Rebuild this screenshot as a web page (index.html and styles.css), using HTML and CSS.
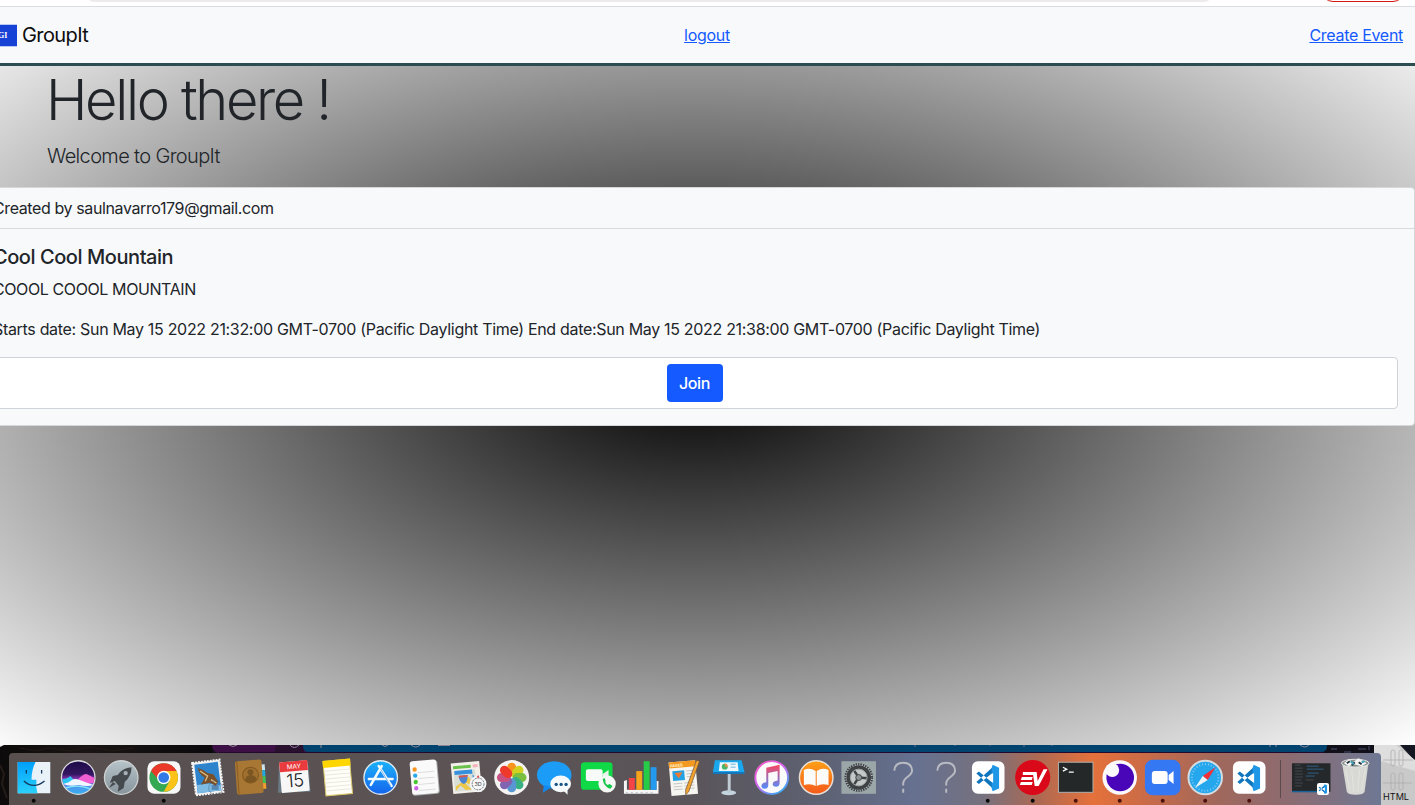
FILE: index.html
```html
<!DOCTYPE html>
<html lang="en">
<head>
<meta charset="utf-8">
<title>GroupIt</title>
<link rel="stylesheet" href="styles.css">
</head>
<body>
<div class="screen">
  <div class="toolbar"><div class="omnibox"></div><div class="update-pill"></div></div>
  <main class="page">
    <nav class="navbar">
      <div class="brand"><span class="logo">GI</span><span class="brand-name">GroupIt</span></div>
      <a class="link logout" href="#">logout</a>
      <a class="link create" href="#">Create Event</a>
    </nav>
    <header class="hero">
      <h1 class="title"><span>Hello there !</span></h1>
      <p class="lead"><span>Welcome to GroupIt</span></p>
    </header>
    <section class="card">
      <div class="card-header"><span>Created by saulnavarro179@gmail.com</span></div>
      <div class="card-body">
        <h5 class="card-title"><span>Cool Cool Mountain</span></h5>
        <p class="card-text caps"><span>COOOL COOOL MOUNTAIN</span></p>
        <p class="card-text dates"><span>Starts date: Sun May 15 2022 21:32:00 GMT-0700 (Pacific Daylight Time) End date:Sun May 15 2022 21:38:00 GMT-0700 (Pacific Daylight Time)</span></p>
        <div class="join-box"><button class="join">Join</button></div>
      </div>
    </section>
  </main>
  <footer class="desktop">
    <svg class="wallpaper" width="1415" height="61" viewBox="0 0 1415 61">
      <defs><linearGradient id="rock" x2="1"><stop stop-color="#0c0a0a"/><stop offset=".4" stop-color="#1a1514"/><stop offset="1" stop-color="#0b090c"/></linearGradient></defs>
      <rect width="1415" height="61" fill="#111018"/>
      <rect width="213" height="61" fill="url(#rock)"/>
      <path d="M20 3l16 3 13-3 21 3 19-4 24 4 20-3" stroke="#221a18" fill="none"/>
      <path d="M0 20l4 9-2 10 5 14" stroke="#241c19" fill="none" stroke-width="2"/>
      <path d="M212 0h95v8h-89q-6-2-6-8" fill="#3c1045"/>
      <path d="M276 0h28v8h-30z" fill="#29102f"/>
      <path d="M303 0h1024v1q0 6-6 6H309q-6 0-6-6z" fill="#00436f"/>
      <path d="M219 7.500h1105" stroke="#24092e"/>
      <g stroke="#8e8594" fill="none"><path d="M229 0q4 3 8 0M290 0q4 5 9 0M382 0q3 3 6 0M411 0q5 4 9 0M438 .500h12M321 0v3M1270 0v2M1276 0v2M1300 0q5 4 9 0"/><path d="M915 0v2M955 0v1M990 0v1M1024 0v2M1052 0v1" opacity=".7"/></g>
      <g stroke="#2e3145" stroke-width="2"><path d="M1331 4h6M1344 7h7M1358 4h8M1369 1v4"/></g>
      <path d="M1374 0h41v61h-41z" fill="#c9c9c9"/><path d="M1400 0h15v16z" fill="#141722"/><path d="M1374 0h22l19 15v11l-41-12z" fill="#dedede"/>
      <g stroke="#ababab" fill="none" stroke-width=".7"><path d="M1383 15h30M1383 38h29"/><rect x="1391" y="5" width="4" height="16" rx="2"/><rect x="1399" y="5" width="4" height="16" rx="2"/><rect x="1391" y="28" width="4" height="17" rx="2"/><rect x="1399" y="28" width="4" height="17" rx="2"/></g>
      <path d="M0 0v2l4-2zM1415 0h-9q6 0 9-3z" fill="#eee"/>
      <text x="1383" y="55" class="thumb-label" textLength="26" lengthAdjust="spacingAndGlyphs">HTML</text>
    </svg>
    <div class="dock">
      <svg viewBox="0 0 44 52"><defs><linearGradient id="fb" x2="0" y2="1"><stop stop-color="#00a0fb"/><stop offset="1" stop-color="#2ad0fb"/></linearGradient></defs><path d="M5.8 8.800h33v31.600h-33z" fill="#e9f1f9"/><path d="M5.800 8.800h18c-3 6-4 12-4 18h5q-1 7 1 13.600h-20z" fill="url(#fb)"/><path d="M14.500 17v3.500M30 17v3.500" stroke="#14375e" stroke-width="1.300"/><path d="M12 28q10 9 21 0" fill="none" stroke="#14375e" stroke-width="1.300"/><circle class="dot" cx="22" cy="48" r="2"/></svg>
      <svg viewBox="0 0 44 52"><defs><linearGradient id="si" x2="0" y2="1"><stop stop-color="#1c0b48"/><stop offset=".4" stop-color="#33165f"/><stop offset=".55" stop-color="#8a35b5"/><stop offset=".75" stop-color="#5791ef"/><stop offset="1" stop-color="#2fb2ee"/></linearGradient></defs><circle cx="22.500" cy="24.500" r="17" fill="url(#si)" stroke="#dadadd" stroke-width="1.300"/><path d="M6.500 26q5 0 8-3 3 3 5 6l-12 2z" fill="#2bc4f0"/><path d="M22 27q5-6 9-6 4 2 8 4l-1 5-14 2z" fill="#ef5fd2"/><path d="M7 31q6-1 9-4 3-2 8 0t14 5q-6 2-15 0-9 2-16-1" fill="#f1f5ff"/><path d="M10 35q12-4 25 1" fill="none" stroke="#7fe8f5" stroke-width="1.500"/></svg>
      <svg viewBox="0 0 44 52"><defs><linearGradient id="ro" x2="0" y2="1"><stop stop-color="#b6c3c9"/><stop offset="1" stop-color="#88949b"/></linearGradient></defs><circle cx="22.500" cy="24.500" r="17" fill="url(#ro)" stroke="#cdd2d3" stroke-width="1.300"/><path d="M33 14q-10 1-14 8l-5 1-3 7 5-2 4 5-1 6 6-4 1-6q7-6 7-15" fill="#454a4e"/><circle cx="27" cy="20" r="2.200" fill="#a8b2b8"/><path d="M14 29l-4 6 7-4z" fill="#474c50"/></svg>
      <svg viewBox="0 0 44 52"><rect x="5.500" y="8" width="33.500" height="33" rx="7" fill="#f8f8f8"/><circle cx="22" cy="24.500" r="14.500" fill="#35a853"/><path d="M9.200 17.800A14.500 14.500 0 0 1 35 18H22L18 28z" fill="#ea3928"/><path d="M22 39A14.500 14.500 0 0 0 35 18H22l6 10z" fill="#fbc218"/><circle cx="22" cy="24.500" r="6.800" fill="#fff"/><circle cx="22" cy="24.500" r="5.400" fill="#3079e6"/><circle class="dot" cx="22" cy="48" r="2"/></svg>
      <svg viewBox="0 0 44 52"><g transform="rotate(-7 22 24)"><rect x="8" y="8" width="28" height="33" fill="#eee" stroke="#f7f7f7" stroke-width="2" stroke-dasharray="2 1"/><rect x="10" y="10" width="24" height="29" fill="#2e83cd"/><path d="M10 31q13-2 24 3v5H10z" fill="#7dbbe5"/><path d="M13 14q6 2 9 6l6 2 4 8-3 4-5-4-10 1 3-4 2-3q-5-3-6-10" fill="#79502c"/><path d="M15 17l7 6-3 5M25 27l5 4" stroke="#dfbd82" stroke-width="1.300" fill="none"/></g><circle cx="30" cy="35" r="7" fill="none" stroke="#3a4c61" opacity=".4"/><rect x="26" y="32" width="7" height="5" fill="#2d5684" opacity=".5"/></svg>
      <svg viewBox="0 0 44 52"><g transform="rotate(-4 22 24)"><path d="M33 12h4v6h-4z" fill="#c9e4ec"/><path d="M33 18h4v6h-4z" fill="#21a9dd"/><path d="M33 24h4v7h-4z" fill="#42bf55"/><path d="M33 31h4v6h-4z" fill="#f29e2e"/><rect x="7" y="7" width="27" height="34" rx="2" fill="#a77733"/><path d="M9 7v34" stroke="#8b5d23"/><circle cx="22" cy="22" r="8" fill="#9f702e" stroke="#81571f"/><circle cx="22" cy="19" r="3" fill="#7b5622"/><path d="M16 27q1-5 6-5t6 5q-6 5-12 0" fill="#7b5622"/></g></svg>
      <svg viewBox="0 0 44 52"><path d="M6 13l-1 27 33-1-2-27z" fill="#687983"/><g transform="rotate(-5 22 24)"><rect x="7.500" y="8" width="28.500" height="31" rx="1" fill="#f7f7f7"/><path d="M7.500 8H36v10H7.500z" fill="#e93b3d"/><text x="22" y="15.500" class="cal-m">MAY</text><text x="22" y="34" class="cal-d">15</text></g></svg>
      <svg viewBox="0 0 44 52"><g transform="rotate(-5 22 24)"><rect x="8.500" y="7" width="27" height="35" fill="#fffef7" stroke="#d9c769"/><path d="M8 6.500h28v7H8z" fill="#ffd600"/><path d="M9 17h26M9 21h26M9 25h26M9 29h26M9 33h26M9 37h26" stroke="#dfded9" stroke-width=".7"/></g></svg>
      <svg viewBox="0 0 44 52"><defs><linearGradient id="as" x2="0" y2="1"><stop stop-color="#1bb2fa"/><stop offset="1" stop-color="#1464ec"/></linearGradient></defs><circle cx="22" cy="24.500" r="17" fill="url(#as)" stroke="#e1e9ef" stroke-width="1.400"/><path d="M23 13L12 32M20 13l13 20M10 26h24" stroke="#f4fbff" stroke-width="2.600" stroke-linecap="round"/><path d="M22 16l10 17" stroke="#287fd8" stroke-width=".6"/></svg>
      <svg viewBox="0 0 44 52"><g transform="rotate(-5 22 24)"><rect x="8" y="8" width="28" height="34" rx="3" fill="#a6a8aa"/><rect x="8" y="7" width="27" height="34" rx="3" fill="#fafafa"/><path d="M15 19h17M15 25h17M15 31h17M15 37h17" stroke="#ddd"/><circle cx="12.500" cy="15.500" r="2.200" fill="#f79320"/><circle cx="12.500" cy="21.800" r="2.200" fill="#28a9ec"/><circle cx="12.500" cy="28.200" r="2.200" fill="#48c62f"/><circle cx="12.500" cy="34.600" r="2.200" fill="#cd60e8"/></g></svg>
      <svg viewBox="0 0 44 52"><g transform="rotate(-5 20 24)"><rect x="6" y="9" width="29" height="31" fill="#f2f0e9"/><path d="M8 12h18v3H8z" fill="#69c24c"/><path d="M28 12h5v3h-5z" fill="#f5b1bd"/><path d="M8 17h22v21H8z" fill="#d9ded6"/><path d="M9 17h18v5l5 5v4l-5-4v-6H9z" fill="#3590dd"/><path d="M9 33l8-5 8 9h-6l-5-5-5 5zM16 28l7-4 5 10" fill="#edc846"/><path d="M13 22h9q0 7-4.500 9Q13 29 13 22" fill="#4c85d0"/><path d="M13 22h9v2h-9z" fill="#da594d"/></g><circle cx="32.500" cy="31" r="8.500" fill="#f6f6f6"/><circle cx="32.500" cy="31" r="6" fill="none" stroke="#66727e" stroke-dasharray="2 1"/><path d="M31 24.500h3L32.500 22z" fill="#e14242"/><text x="32.500" y="33" class="map-t">3D</text></svg>
      <svg viewBox="0 0 44 52"><circle cx="22" cy="24.500" r="17.700" fill="#f5f4f3"/><g transform="translate(22 24.500)" class="petals"><rect x="-4.500" y="-15" width="9" height="14" rx="4.500" fill="#f98e10"/><rect x="-4.500" y="-15" width="9" height="14" rx="4.500" fill="#cfd015" transform="rotate(45)"/><rect x="-4.500" y="-15" width="9" height="14" rx="4.500" fill="#74bd36" transform="rotate(90)"/><rect x="-4.500" y="-15" width="9" height="14" rx="4.500" fill="#2fac7f" transform="rotate(135)"/><rect x="-4.500" y="-15" width="9" height="14" rx="4.500" fill="#5093d2" transform="rotate(180)"/><rect x="-4.500" y="-15" width="9" height="14" rx="4.500" fill="#7a5cae" transform="rotate(225)"/><rect x="-4.500" y="-15" width="9" height="14" rx="4.500" fill="#c54a7b" transform="rotate(270)"/><rect x="-4.500" y="-15" width="9" height="14" rx="4.500" fill="#ef2f20" transform="rotate(315)"/></g></svg>
      <svg viewBox="0 0 44 52"><ellipse cx="21.500" cy="22" rx="17.500" ry="14" fill="#1b9cf7"/><path d="M11 32l-1 8 9-6" fill="#1289ed"/><ellipse cx="28" cy="31" rx="10.500" ry="8.500" fill="#f7fbfd"/><path d="M31 38l4 4v-6z" fill="#f7fbfd"/><g fill="#165387"><circle cx="23.500" cy="31.500" r="1.700"/><circle cx="28.500" cy="31.500" r="1.700"/><circle cx="33.500" cy="31.500" r="1.700"/></g></svg>
      <svg viewBox="0 0 44 52"><rect x="4" y="9" width="32" height="28" rx="3.500" fill="#0fd947"/><rect x="9" y="16" width="17" height="12" rx="2" fill="#f8faf7"/><path d="M26 21l6-4v12l-6-4" fill="#e9f3e9"/><circle cx="30.500" cy="31" r="8.800" fill="#f6f8f6"/><path d="M26 26q1 8 8 10l2-3-3-2-2 1q-3-2-2-4l-1-3z" fill="#16c64a"/></svg>
      <svg viewBox="0 0 44 52"><path d="M4 28l3-1v10h30v-9h2v13H4z" fill="#f6f6f6"/><path d="M9 25h6v12H9z" fill="#f44446"/><path d="M16.500 18h6v19h-6z" fill="#f9a51b"/><path d="M24 8h6v29h-6z" fill="#27cc46"/><path d="M31 14h6v23h-6z" fill="#249aef"/><path d="M6 40h30" stroke="#aeb4b8" stroke-dasharray="2 3"/></svg>
      <svg viewBox="0 0 44 52"><g transform="rotate(-5 22 24)"><rect x="7" y="8" width="27" height="34" fill="#f7f5f0"/><path d="M7 8h27v6H7z" fill="#f4991f"/><text x="8" y="13" class="pages-t">PAGES</text><path d="M10 17h12v10H10z" fill="#24a2e4"/><path d="M12 19h8l-4 6z" fill="#ef7832"/><path d="M24 18h8M24 21h8M24 24h8M10 30h9M21 30h10M10 33h9M21 33h10M10 36h9M21 36h10" stroke="#c4c6c6"/></g><path d="M34 7l3 1-11 31-3 3 0-5z" fill="#f3a42f" stroke="#6c4d34" stroke-width=".7"/></svg>
      <svg viewBox="0 0 44 52"><ellipse cx="22" cy="40" rx="7.500" ry="2.500" fill="#c4d4dd"/><path d="M21 20h3v20h-3z" fill="#becbd3"/><path d="M8 7h27l3 12H6z" fill="#19a8ed"/><path d="M6 19h32v2H6z" fill="#1577b9"/><path d="M13 9h18l1 9H12z" fill="#eff7fa"/><circle cx="18" cy="13.500" r="3" fill="#47b86a"/><path d="M18 13v-3q3 1 3 4" fill="#f48745"/><path d="M24 11h5M24 14h5" stroke="#64b4df"/></svg>
      <svg viewBox="0 0 44 52"><defs><linearGradient id="mu" x2=".7" y2="1"><stop stop-color="#f659bd"/><stop offset=".5" stop-color="#d764ef"/><stop offset="1" stop-color="#3ca8f3"/></linearGradient><linearGradient id="mn" x2="0" y2="1"><stop stop-color="#fb465e"/><stop offset="1" stop-color="#548cfd"/></linearGradient></defs><circle cx="22" cy="24.500" r="16.600" fill="#fafafa" stroke="url(#mu)" stroke-width="2"/><path d="M16.500 14.500L30 11.500V30q0 3.500-3.500 3.800-3.500 0-3.500-2.800 0-3 5-3.600V18l-9.500 2v12q0 3.500-3.500 3.800-3.500 0-3.500-2.800 0-3 5-3.600z" fill="url(#mn)"/></svg>
      <svg viewBox="0 0 44 52"><defs><linearGradient id="bk" x2="0" y2="1"><stop stop-color="#ffa016"/><stop offset="1" stop-color="#f4591b"/></linearGradient></defs><circle cx="22.500" cy="24.500" r="17" fill="url(#bk)" stroke="#e7dfd6" stroke-width="1.500"/><path d="M22 18q-6-4-12-1v15q7-2 12 1zM23 18q6-4 12-1v15q-7-2-12 1z" fill="#fbfbf9"/></svg>
      <svg viewBox="0 0 44 52"><rect x="4.500" y="8" width="35" height="33" fill="#9ba6a9"/><circle cx="22" cy="24.500" r="13.500" fill="#c5c8c8" stroke="#3e4346" stroke-width="2" stroke-dasharray="1.500 1"/><circle cx="22" cy="24.500" r="10.500" fill="none" stroke="#3e4245" stroke-width="4"/><path d="M22 24.500l12 1M22 24.500L15 14M22 24.500L15 35" stroke="#404548" stroke-width="2.500"/><circle cx="22" cy="24.500" r="3" fill="#8c9293" stroke="#404548"/><circle cx="22" cy="24.500" r="8.500" fill="none" stroke="#9fa4a5"/></svg>
      <svg viewBox="0 0 44 52"><path class="q" d="M13.500 17.500q.5-8 9-8t9 8c0 6-9 6.500-9 13v2M22.500 36v4"/></svg>
      <svg viewBox="0 0 44 52"><path class="q" d="M13.500 17.500q.5-8 9-8t9 8c0 6-9 6.500-9 13v2M22.500 36v4"/></svg>
      <svg viewBox="0 0 44 52"><use href="#code"/><circle class="dot" cx="21" cy="48" r="2"/></svg>
      <svg viewBox="0 0 44 52"><circle cx="22" cy="24.500" r="17.800" fill="#da091a"/><path d="M12 19h12l-1 3H12zM11 24h11l-1 3H10zM10 29h12l-1 3H9zM22 19h4l1 9 6-12h4l-9 17h-4z" fill="#fff"/><circle class="dot" cx="22" cy="48" r="2"/></svg>
      <svg viewBox="0 0 44 52"><rect x="4.500" y="9" width="35" height="30.500" fill="#252829" stroke="#aeb0ad"/><path d="M9 14l4 2-4 2M15 19h5" stroke="#fff" stroke-width="1.200" fill="none"/><circle class="dot red" cx="22" cy="48" r="2"/></svg>
      <svg viewBox="0 0 44 52"><circle cx="22" cy="24.500" r="17.500" fill="#fafafd"/><circle cx="22.500" cy="24.500" r="14" fill="#4906b8"/><circle cx="14.500" cy="17" r="7" fill="#fafafd"/><circle class="dot red" cx="22" cy="48" r="2"/></svg>
      <svg viewBox="0 0 44 52"><rect x="4" y="6.500" width="36" height="36" rx="8" fill="#3478f4"/><rect x="11" y="18" width="16" height="13" rx="3" fill="#fff"/><path d="M28 22l5-4v13l-5-4z" fill="#fff"/><circle class="dot red" cx="22" cy="48" r="2"/></svg>
      <svg viewBox="0 0 44 52"><circle cx="21.500" cy="24.500" r="17" fill="#24a7ed" stroke="#d6dce0" stroke-width="2"/><circle cx="21.500" cy="24.500" r="13.500" fill="none" stroke="#87c9f2" stroke-width="2" stroke-dasharray="1 2"/><path d="M32 14L24 27l-5-4z" fill="#ef3038"/><path d="M24 27l-5-4-8 12z" fill="#edf4f8"/><circle class="dot red" cx="21.500" cy="48" r="2"/></svg>
      <svg viewBox="0 0 44 52"><g id="code"><rect x="5" y="8" width="33" height="33" rx="6" fill="#fff"/><path d="M9.500 20.500l2.500-2L27 30.500v6zM9.500 29l2.500 2 15-12v-6z" fill="#0f75bd"/><path d="M26 11.500l6.500 3v21l-6.500 3-1-3v-21z" fill="#1f97e6"/><path d="M26.500 20v10l-6.500-5z" fill="#fff"/></g><circle class="dot red" cx="21.500" cy="48" r="2"/></svg>
      <span class="separator"></span>
      <svg class="window" viewBox="0 0 44 52"><path d="M2 10h39v29H2z" fill="#25282b"/><path d="M5 12h6M5 15h8M5 18h7M5 21h8M5 24h8M5 27h7M5 30h8M5 33h7" stroke="#44494c"/><path d="M17 13h12M17 16h17M18 20h11M16 23h9" stroke="#2f6187"/><path d="M16 27h8" stroke="#44494c"/><path d="M2 38h28v1.500H2z" fill="#176199"/><use href="#code" transform="translate(25.500 27) scale(.37)"/></svg>
      <svg viewBox="0 0 44 52"><path d="M8 9l5 30q1 3 9 3t9-3l4-30z" fill="#d8d9d5"/><ellipse cx="21.500" cy="10" rx="14" ry="4" fill="#8a9290" stroke="#e7e9e7"/><path d="M10 10l5-4 4 3 6-4 8 5-5 3-8-2-5 2z" fill="#f5f6f4"/><path d="M13 10l3-2M18 12l3-3M25 9l3 2" stroke="#26323c" stroke-width="2"/><path d="M17 8l3 3M28 9l3-1" stroke="#42a4bc" stroke-width="2"/><path d="M12 17l4 20M18 17l2 22M26 16l-2 23M32 14l-4 23" stroke="#e6e6e2" opacity=".8"/></svg>
    </div>
  </footer>
</div>
</body>
</html>
```
FILE: styles.css
```css
* { box-sizing: border-box; }
body { margin: 0; font-family: Inter, sans-serif; font-size: 16px; line-height: 1.5; color: #212529; }
h1, h5, p { margin: 0; }
.screen { width: 1415px; height: 805px; overflow: hidden; display: flex; flex-direction: column; background: #fff; }
.toolbar { height: 7px; flex: none; display: flex; padding-left: 86px; border-bottom: 1px solid #dadce0; background: #fff; overflow: hidden; }
.omnibox { width: 1126px; height: 16px; margin-top: -14px; border-radius: 8px; background: #ebebeb; }
.update-pill { width: 84px; height: 24px; margin: -22px 0 0 109px; border: 1px solid #d51414; border-radius: 12px; }
.page { height: 738px; flex: none; width: 1439px; margin-left: -24px; background: radial-gradient(#000, #fff); }
.navbar { height: 59px; display: grid; grid-template-columns: 1fr auto 1fr; align-items: center; background: #f8f9fb; border-bottom: 3px solid #2b4d50; padding: 0 12px 0 16px; }
.brand { display: flex; align-items: center; gap: 5px; }
.logo { width: 25px; height: 23px; background: #1642d5; color: #fff; font: bold 8px/21px "Liberation Serif", serif; padding-left: 6px; border-block: 1px solid #b8c9f4; }
.brand-name { font-size: 20px; letter-spacing: -.6px; color: #0c0d0e; }
.link { color: #145aff; letter-spacing: -.3px; text-decoration: underline; }
.logout { margin-left: 19px; }
.create { justify-self: end; }
.hero { padding: 1px 70px 0; }
.title { font-size: 56px; font-weight: 300; line-height: 67px; letter-spacing: -2.35px; margin-bottom: 7px; }
.lead { font-size: 20px; font-weight: 300; letter-spacing: -.65px; line-height: 30px; margin: 0 0 16px 1px; }
.card { background: #f8f9fb; border: 1px solid #d5d7d9; border-radius: 4px; height: 239px; }
.card-header { padding: 8px 16px; height: 41px; border-bottom: 1px solid #d8dadc; letter-spacing: -.39px; }
.card-body { padding: 16px; display: flex; flex-direction: column; }
.card-title { font-size: 20px; font-weight: 500; line-height: 24px; letter-spacing: -.44px; margin-bottom: 8px; }
.card-text { margin-bottom: 16px; white-space: nowrap; }
.caps { letter-spacing: -.4px; }
.dates { letter-spacing: -.317px; }
.join-box { height: 52px; display: flex; align-items: center; justify-content: center; padding-right: 2px; background: #fff; border: 1px solid #ced4da; border-radius: 4px; }
.join { width: 56px; height: 38px; padding: 0; border: 0; border-radius: 4px; background: #145aff; color: #fff; font: 500 16px Inter, sans-serif; letter-spacing: -.4px; }
.desktop { height: 60px; flex: none; display: grid; }
.wallpaper, .dock { grid-area: 1 / 1; }
.wallpaper { display: block; overflow: hidden; }
.thumb-label { font: 9.5px Inter, sans-serif; fill: #111; }
.dock { width: 1372px; height: 52px; margin: 8px 0 0 9px; padding-left: 3.1px; display: flex; overflow: hidden; border-radius: 4px 4px 0 0; background: linear-gradient(90deg, #58504f, #5b5355 38%, #5a555a 50%, #5d6172 59%, #667190 66%, #76717e 71%, #ad6953 75%, #e5713b 79%, #c86b48 83%, #a1685c 88%, #8d6b70 93%, #6e7893); }
.dock svg { width: 43.43px; height: 52px; flex: none; overflow: visible; }
.separator { width: 1px; height: 38px; margin: 7px 9px 0; background: #5b4950; flex: none; }
.petals { opacity: .95; }
.dock .dot { fill: #090909; }
.dock .red { fill: #4d100d; }
.q { fill: none; stroke: #b8bac2; stroke-width: 2; }
.cal-m { font: 6.5px Inter, sans-serif; fill: #fff; text-anchor: middle; }
.cal-d { font: 18.5px Inter, sans-serif; font-weight: 300; fill: #222; text-anchor: middle; letter-spacing: -.5px; }
.map-t { font: 5.5px Inter, sans-serif; fill: #444; text-anchor: middle; }
.pages-t { font: bold 4px Inter, sans-serif; fill: #fff3cf; }
```
